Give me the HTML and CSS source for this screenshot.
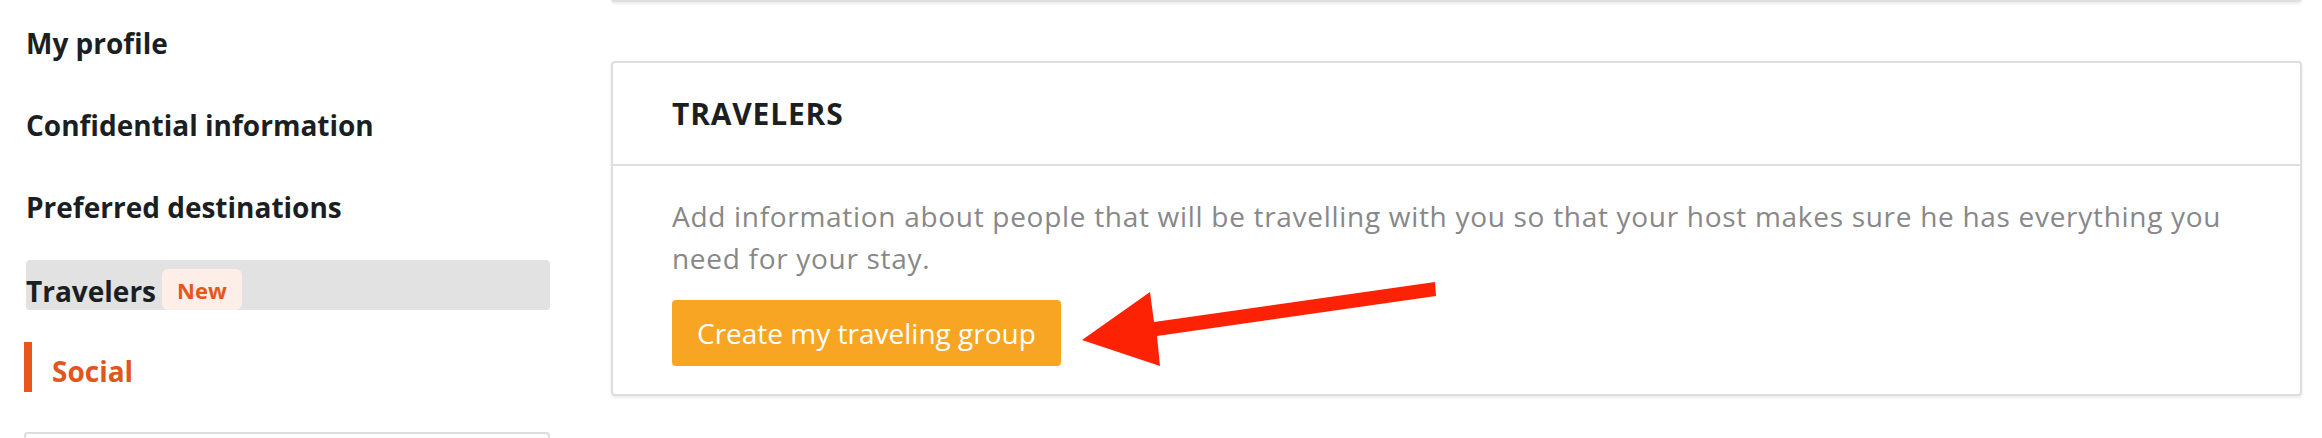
FILE: index.html
```html
<!DOCTYPE html>
<html lang="en">

<head>
    <meta charset="UTF-8">
    <meta name="viewport" content="width=device-width, initial-scale=1.0">
    <title>Travelers</title>
    <link rel="stylesheet" href="styles.css">
</head>

<body>
    <div class="page">
        <div class="sidebar">
            <div class="navitem">My profile</div>
            <div class="navitem">Confidential information</div>
            <div class="navitem">Preferred destinations</div>
            <div class="navitem hover">Travelers <span class="badge">New</span></div>
            <div class="navitem active">Social</div>
            <div class="sidebox"></div>
        </div>

        <div class="main">
            <div class="card prev"></div>
            <div class="card">
                <div class="card-head">TRAVELERS</div>
                <div class="card-body">
                    <p>Add information about people that will be travelling with you so that your host makes sure he has everything you need for your stay.</p>
                    <button class="btn">Create my traveling group</button>
                </div>
            </div>
        </div>
    </div>

    <svg class="arrow" width="370" height="97" viewBox="1075 275 370 97">
        <polygon points="1082,340 1150,292 1154,322 1435,282 1436,296 1157,336 1160,366" fill="#fe2205" />
    </svg>
</body>

</html>
```

FILE: styles.css
```css
body {
    margin: 0;
    font-family: "Open Sans", Lato, sans-serif;
    color: #1c1f22;
    background-color: #fff;
    position: relative;
    overflow: hidden;
    height: 438px;
}

.page {
    display: flex;
    padding-left: 24px;
}

.sidebar {
    width: 526px;
    display: flex;
    flex-direction: column;
    gap: 32px;
    padding-top: 14px;
}

.navitem {
    height: 50px;
    padding-top: 7px;
    box-sizing: border-box;
    display: flex;
    align-items: center;
    margin-left: 2px;
    font-size: 28px;
    font-weight: 700;
}

.navitem.hover {
    background-color: #e2e2e2;
    border-radius: 4px;
    padding-top: 0;
    align-items: flex-end;
    padding-bottom: 0;
}

.badge {
    margin-left: 6px;
    height: 41px;
    padding: 0 15px;
    box-sizing: border-box;
    display: flex;
    align-items: center;
    background-color: #fdeee7;
    color: #e8561d;
    border-radius: 6px;
    font-size: 22px;
}

.navitem.active {
    margin-left: 0;
    border-left: 8px solid #e8561c;
    padding-left: 20px;
    color: #e0561c;
    padding-top: 7px;
}

.sidebox {
    margin-top: 8px;
    height: 60px;
    border: 2px solid #dddddd;
    border-radius: 4px;
}

.main {
    margin-left: 61px;
    width: 1691px;
}

.card {
    border: 2px solid #dedede;
    border-radius: 4px;
    box-shadow: 0 2px 3px rgba(0, 0, 0, 0.08);
    background-color: #fff;
}

.card.prev {
    height: 20px;
    margin-top: -22px;
    margin-bottom: 59px;
}

.card-head {
    height: 101px;
    display: flex;
    align-items: center;
    padding-left: 59px;
    border-bottom: 2px solid #dedede;
    font-size: 30px;
    font-weight: 700;
    letter-spacing: 0.8px;
}

.card-body {
    padding: 29px 60px 28px 59px;
}

.card-body p {
    margin: 0 0 21px;
    font-size: 28px;
    line-height: 42px;
    letter-spacing: 0.7px;
    color: #888888;
}

.btn {
    height: 66px;
    padding: 0 25px;
    border: none;
    border-radius: 4px;
    background-color: #f8a524;
    color: #fff;
    font-family: inherit;
    font-size: 28px;
}

.arrow {
    position: absolute;
    left: 1075px;
    top: 275px;
}
```
